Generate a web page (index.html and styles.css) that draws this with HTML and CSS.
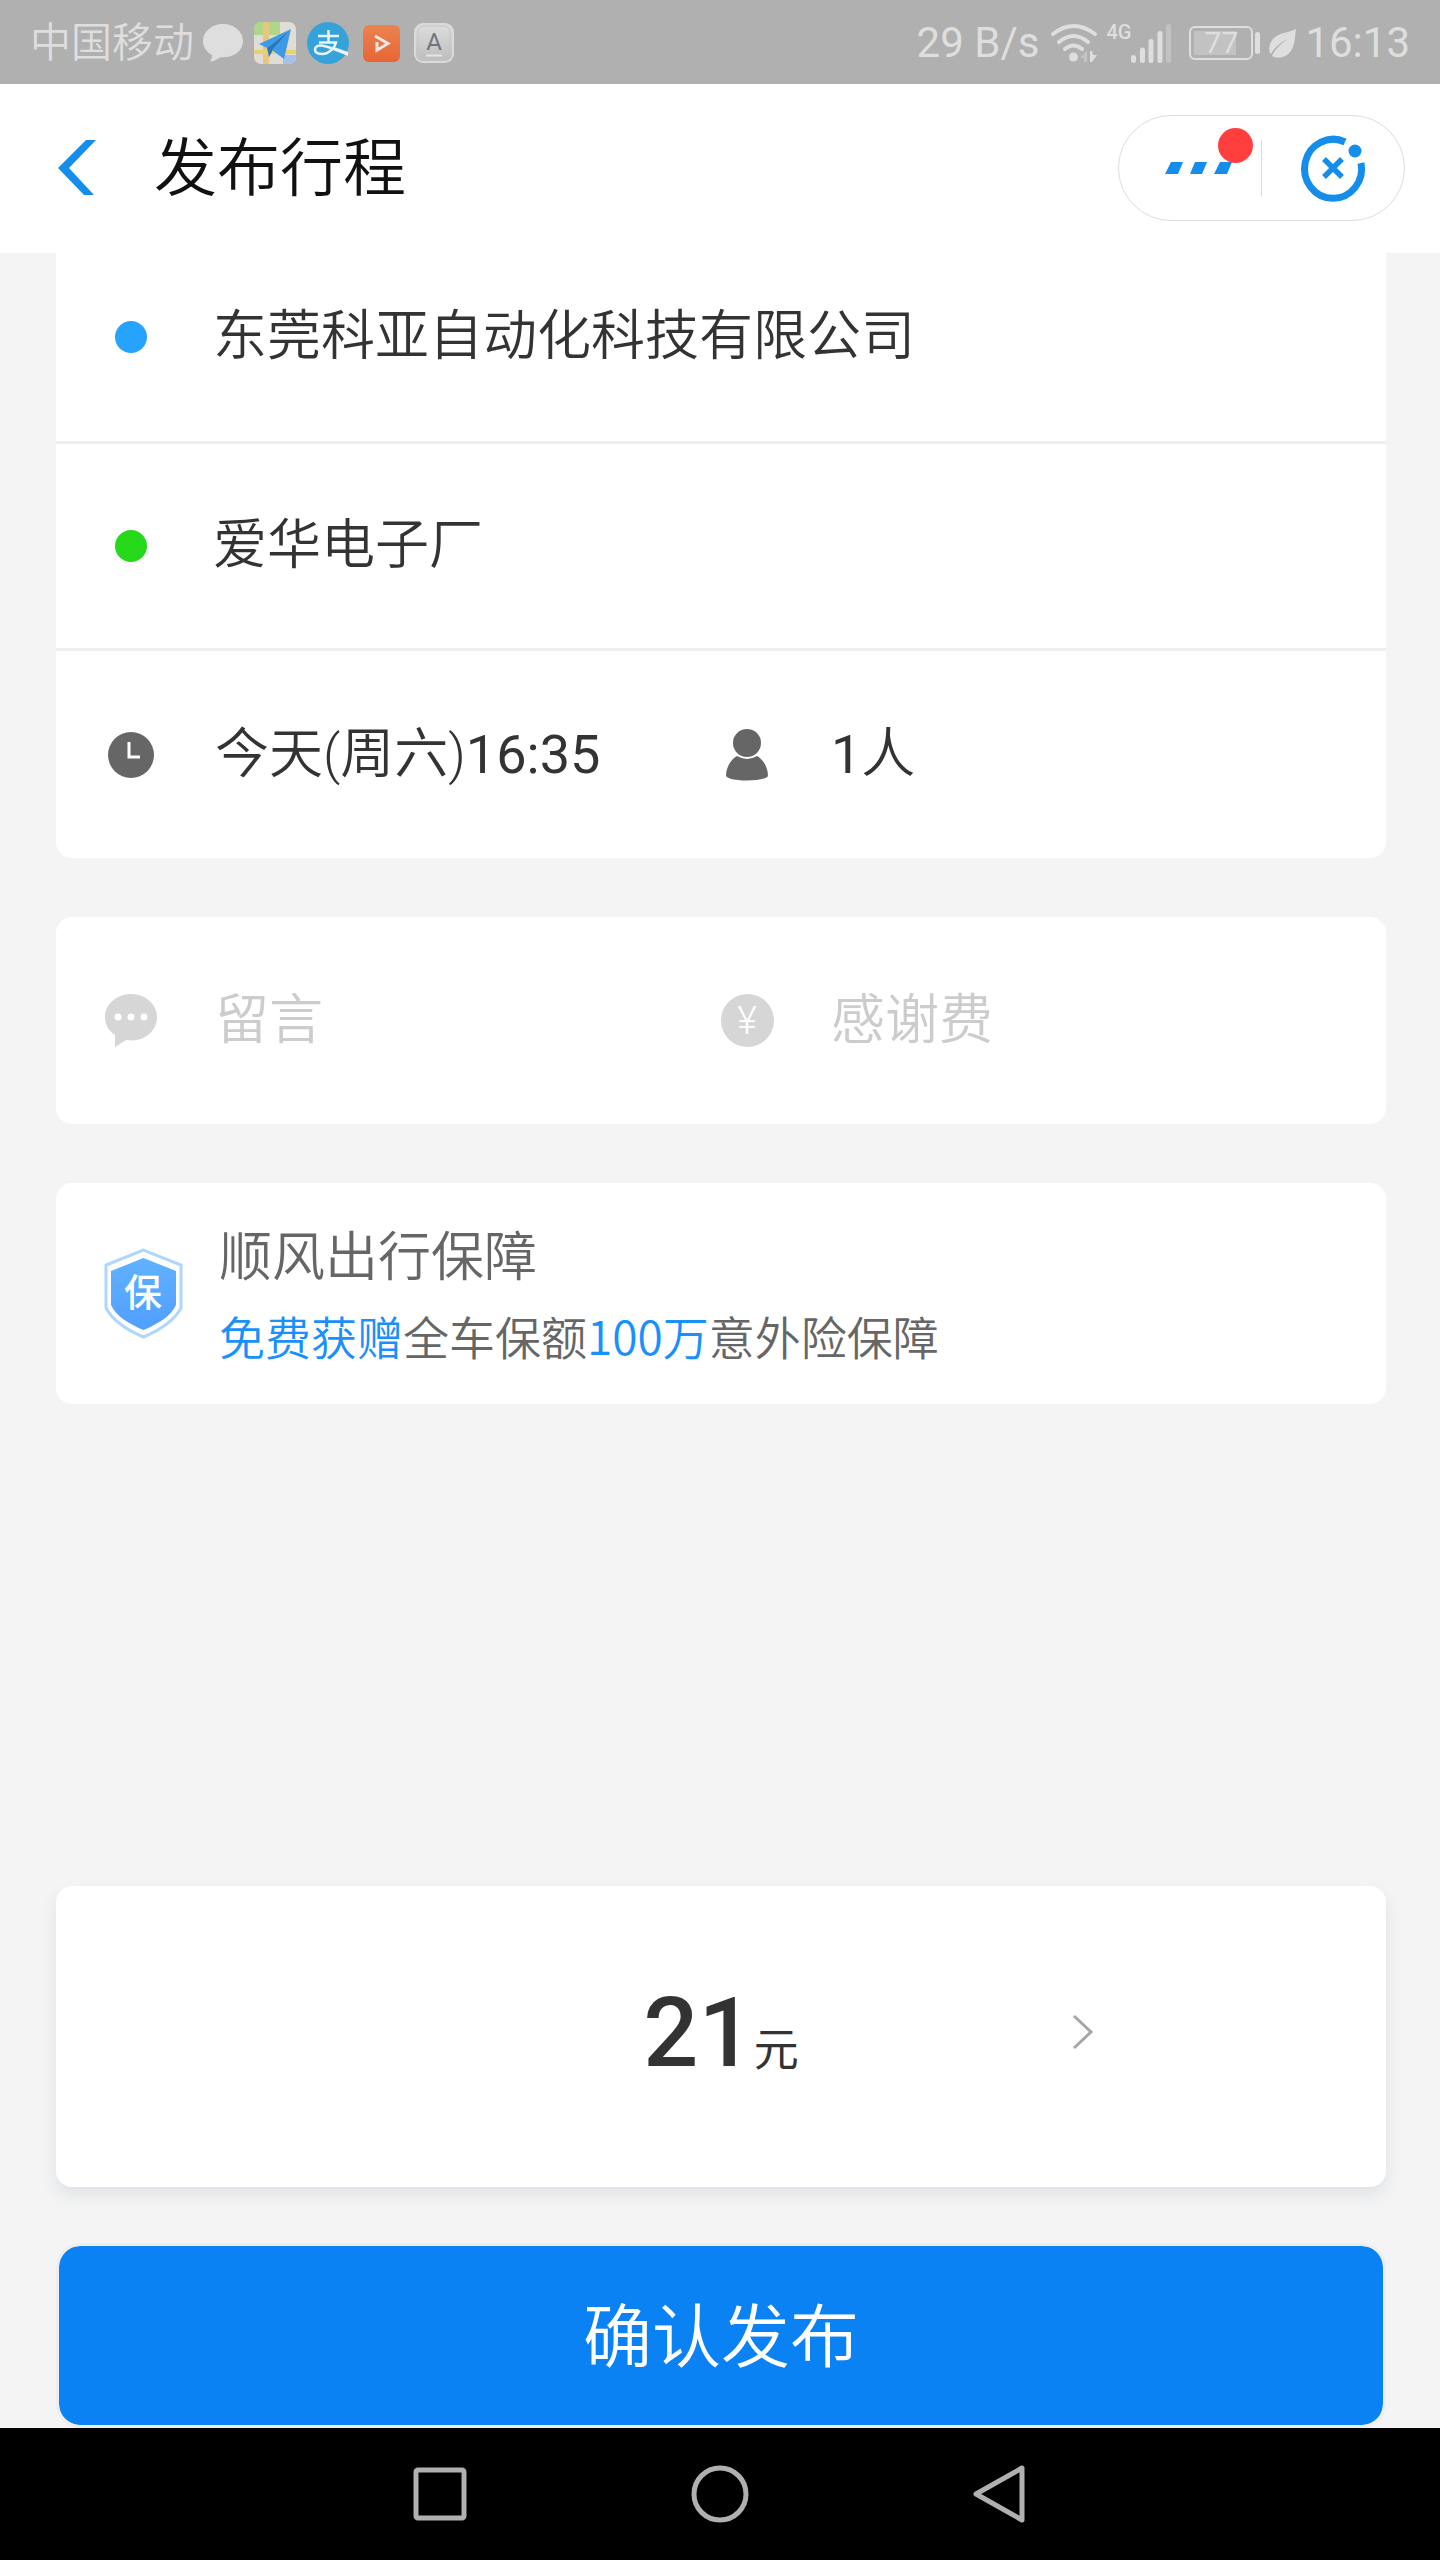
FILE: index.html
```html
<!DOCTYPE html>
<html lang="zh-CN">
<head>
<meta charset="utf-8">
<meta name="viewport" content="width=device-width, initial-scale=1">
<title>发布行程</title>
<link rel="stylesheet" href="styles.css">
</head>
<body>
<div class="status">
  <div class="status-left">
    <span class="carrier">中国移动</span>
    <svg width="40" height="38" viewBox="0 0 40 38"><path fill="#dedede" d="M20 0C9 0 0 7.500 0 17c0 6 3.500 11 9 14 0 2.500-.5 4-2 6.500 4.500-.5 8-2.500 10.500-4.300C30 34.500 40 27 40 17 40 7.500 31 0 20 0z"/></svg>
    <svg width="42" height="42" viewBox="0 0 42 42">
      <defs><clipPath id="map-clip"><rect width="42" height="42" rx="7"/></clipPath></defs>
      <g clip-path="url(#map-clip)">
        <rect width="42" height="42" fill="#dfddd5"/>
        <path fill="#afd78c" d="M0 0h26v13H0z"/>
        <path fill="#e8c67f" d="M9 0h6v42H9z"/>
        <path fill="#e8d26c" d="M0 28h42v4H0z"/>
        <path fill="#a8c0e8" d="M29 33h13v9H29z"/>
        <path fill="#3d9ce6" d="M37 7 5 22l8 4z"/>
        <path fill="#2878c0" d="M37 7 13 26l2 9 4-7z"/>
        <path fill="#3b9be8" d="M37 7 18 28l12 9z"/>
      </g>
    </svg>
    <svg width="42" height="42" viewBox="0 0 42 42">
      <circle cx="21" cy="21" r="21" fill="#35a3da"/>
      <g fill="none" stroke="#e9f3f8" stroke-width="2.500">
        <path d="M11 14h21M21.500 8v12M12 20.500h17c-1 5-7 11.500-13.500 11.500-5 0-7.500-2-7.500-4.500s2.500-4 5.500-4C20 23.500 30 29 41 32"/>
      </g>
      <path fill="#e9f3f8" d="m27 25 14 5v4l-16-7z"/>
    </svg>
    <svg class="gap-l" width="37" height="37" viewBox="0 0 37 37">
      <defs><linearGradient id="orange" x2="0" y2="1"><stop stop-color="#eb8450"/><stop offset="1" stop-color="#e76435"/></linearGradient></defs>
      <rect width="37" height="37" rx="6" fill="url(#orange)"/>
      <path fill="none" stroke="#f0e7e1" stroke-width="3" d="m12 11 13 7.500L14 25v-8"/>
    </svg>
    <svg class="gap-l" width="40" height="40" viewBox="0 0 40 40">
      <defs><linearGradient id="silver" x2="0" y2="1"><stop stop-color="#dedede"/><stop offset="1" stop-color="#bcbcbc"/></linearGradient></defs>
      <rect x="1" y="1" width="38" height="38" rx="8" fill="url(#silver)" stroke="#dadada" stroke-width="2"/>
      <rect x="4" y="3" width="32" height="34" rx="6" fill="none" stroke="#c4c4c4"/>
      <text class="key-letter" x="20" y="27" text-anchor="middle">A</text>
      <path stroke="#e5e5e5" stroke-width="2" d="M12 32.500h16"/>
    </svg>
  </div>
  <div class="status-right">
    <span>29 B/s</span>
    <svg class="wifi" width="46" height="39" viewBox="0 0 46 39">
      <g fill="none" stroke="#dedede" stroke-width="4" stroke-linecap="round"><path d="M2 10Q22.500-6 44 10M8 18q14.500-12 29 0M14 25q8.500-7 17 0"/></g>
      <circle cx="22.500" cy="33" r="4.500" fill="#dedede"/>
      <path fill="#c4c4c4" d="m29 34 7-7v11h-3v-4z"/><path fill="#dedede" d="M39 27h2l1 4h4l-5 7h-2z"/>
    </svg>
    <span class="net">4G</span>
    <svg width="40" height="39" viewBox="0 0 40 39"><g stroke="#dedede" stroke-width="5" stroke-linecap="round"><path d="M2.500 33.500v3M11.500 26v10.500M20 17.500v19M29 9.500v27"/><path stroke="#c2c2c2" d="M37.500 2.500v34"/></g></svg>
    <span class="battery"><span class="charge">77</span></span>
    <svg class="leaf" width="27" height="29" viewBox="0 0 27 29"><path fill="#dedede" d="M27 0C20 4 9 3 3 11c-3 5-4 11-1 14C6 18 11 14 18 10 12 15 6 20 3 27c5 3 14 2 19-5C26 16 26 7 27 0z"/></svg>
    <span>16:13</span>
  </div>
</div>

<header class="header">
  <button class="back" aria-label="返回"><svg width="38" height="55" viewBox="0 0 38 55"><path fill="#148eea" d="M38 0H28L0 28l26 27h10L11 28z"/></svg></button>
  <h1>发布行程</h1>
  <div class="capsule">
    <button class="more" aria-label="更多">
      <svg width="66" height="12" viewBox="0 0 66 12"><path fill="#148eea" d="M6 0h12l-5 12H0zM30 0h12l-5 12H25zM55 0h12l-5 12H49z"/></svg>
      <span class="badge"></span>
    </button>
    <button class="close" aria-label="关闭">
      <svg width="64" height="66" viewBox="0 0 64 66"><g fill="none" stroke="#148eea"><path stroke-width="7" d="M44 7A28.500 29.500 0 1 0 60 28"/><path stroke-width="5.500" d="m23 24 18 18m0-18L23 42"/></g><circle cx="54" cy="16" r="6.500" fill="#148eea"/></svg>
    </button>
  </div>
</header>

<main class="main">
  <section class="card trip">
    <button class="row origin"><span class="icon"><i class="dot start"></i></span><span>东莞科亚自动化科技有限公司</span></button>
    <button class="row"><span class="icon"><i class="dot end"></i></span><span>爱华电子厂</span></button>
    <div class="pair">
      <button class="cell">
        <span class="icon"><svg width="46" height="46" viewBox="0 0 46 46"><circle cx="23" cy="23" r="23" fill="#666"/><path fill="none" stroke="#fff" stroke-width="3" d="M21 10v15h11"/></svg></span>
        <span>今天(周六)<b>16:35</b></span>
      </button>
      <button class="cell">
        <span class="icon"><svg width="42" height="52" viewBox="0 0 42 52"><circle cx="21" cy="14" r="14" fill="#666"/><path fill="#666" d="M11 27q10 6 20 0c7 4 11 12 11 20-3 6-39 6-42 0 0-8 4-16 11-20z"/></svg></span>
        <span><b>1</b>人</span>
      </button>
    </div>
  </section>

  <section class="card pair extras">
    <button class="cell">
      <span class="icon"><svg width="52" height="53" viewBox="0 0 52 53"><path fill="#d6d6d6" d="M26 0C12 0 0 10 0 23c0 8 4 14 10 18v12l11-7c17 3 31-8 31-23C52 10 40 0 26 0z"/><g fill="#fff"><circle cx="13" cy="23" r="3.500"/><circle cx="26" cy="23" r="3.500"/><circle cx="39" cy="23" r="3.500"/></g></svg></span>
      <span>留言</span>
    </button>
    <button class="cell">
      <span class="icon"><svg width="53" height="53" viewBox="0 0 53 53"><circle cx="26.500" cy="26.500" r="26.500" fill="#d6d6d6"/><text class="yen" x="26" y="40" text-anchor="middle">¥</text></svg></span>
      <span>感谢费</span>
    </button>
  </section>

  <section class="card insurance">
    <svg width="79" height="91" viewBox="0 0 79 91">
      <defs><linearGradient id="shield" x2="0" y2="1"><stop stop-color="#60b2ff"/><stop offset="1" stop-color="#509fff"/></linearGradient></defs>
      <path fill="#fff" stroke="#b0d6fb" stroke-width="3" d="M39.500 2 2 17v43c7 13 21 22 37.500 29C56 82 70 73 77 60V17z"/>
      <path fill="url(#shield)" d="M39.500 10 7 23v34c5 11 18 19 32.500 25C54 76 67 68 72 57V23z"/>
      <text class="shield-text" x="39" y="58" text-anchor="middle">保</text>
    </svg>
    <div>
      <h2>顺风出行保障</h2>
      <p><em>免费获赠</em>全车保额<em>100万</em>意外险保障</p>
    </div>
  </section>

  <div class="bottom">
    <button class="card price">
      <span class="amount">21<small>元</small></span>
      <svg class="chevron" width="22" height="36" viewBox="0 0 22 36"><path fill="none" stroke="#a6a6a6" stroke-width="3" d="m2 2 17 16L2 34"/></svg>
    </button>
    <button class="submit">确认发布</button>
  </div>
</main>

<nav class="nav">
  <button aria-label="最近任务"><svg width="60" height="60" viewBox="0 0 60 60"><rect x="6" y="6" width="48" height="48" rx="2"/></svg></button>
  <button aria-label="主页"><svg width="60" height="60" viewBox="0 0 60 60"><circle cx="30" cy="30" r="26"/></svg></button>
  <button aria-label="返回上一级"><svg width="60" height="60" viewBox="0 0 60 60"><path stroke-linejoin="round" d="M52 4v52L6 30z"/></svg></button>
</nav>
</body>
</html>
```
FILE: styles.css
```css
* { box-sizing: border-box; }

body {
  margin: 0;
  min-height: 100vh;
  display: flex;
  flex-direction: column;
  background: #f4f4f4;
  color: #333;
  font-family: Roboto, "Noto Sans CJK SC", sans-serif;
  font-size: 54px;
  font-weight: 400;
  line-height: 64px;
}

button {
  margin: 0;
  padding: 0;
  border: 0;
  background: none;
  color: inherit;
  font: inherit;
  text-align: left;
  cursor: pointer;
}

svg { display: block; flex: none; overflow: visible; }
h1, h2, p { margin: 0; font-weight: 350; }
b { font-weight: 400; }

/* System status bar */
.status {
  height: 84px;
  padding: 2px 30px 0;
  display: flex;
  align-items: center;
  justify-content: space-between;
  background: #b0b0b0;
  color: #dedede;
  font-size: 42px;
  line-height: 82px;
  white-space: nowrap;
}
.status-left, .status-right { display: flex; align-items: center; }
.carrier { margin-right: 9px; font-size: 41px; font-weight: 350; }
.status-left svg + svg { margin-left: 11px; }
.status-left svg + .gap-l { margin-left: 14px; }
.key-letter { font-size: 24px; fill: #70747a; }
.wifi { margin-left: 12px; }
.net {
  align-self: flex-start;
  margin-left: 9px;
  padding-top: 20px;
  font-size: 20px;
  font-weight: 500;
  line-height: 20px;
}
.battery {
  position: relative;
  width: 64px;
  height: 34px;
  margin: 0 16px 0 18px;
  padding: 3px;
  border: 2px solid #dedede;
  border-radius: 6px;
}
.battery::after {
  content: "";
  position: absolute;
  right: -9px;
  top: 4px;
  width: 5px;
  height: 22px;
  border-radius: 3px;
  background: #dedede;
}
.charge {
  display: block;
  height: 100%;
  text-align: center;
  font-size: 30px;
  line-height: 24px;
  background: linear-gradient(90deg, #c2c2c2 77%, transparent 77%);
}
.leaf { margin-right: 9px; }

/* Title bar */
.header {
  position: sticky;
  top: 0;
  z-index: 1;
  height: 169px;
  padding: 0 35px 2px 58px;
  display: flex;
  align-items: center;
  background: #fff;
}
h1 {
  flex: 1;
  margin-left: 58px;
  padding-top: 2px;
  color: #111;
  font-size: 63px;
}
.capsule {
  width: 287px;
  height: 106px;
  display: grid;
  grid-template-columns: 1fr 1fr;
  border: 1px solid #ddd;
  border-radius: 53px;
}
.capsule button {
  display: flex;
  align-items: center;
  justify-content: center;
}
.capsule .more { position: relative; padding-left: 16px; }
.more::after {
  content: "";
  position: absolute;
  right: 0;
  top: 24px;
  bottom: 24px;
  width: 1px;
  background: #ddd;
}
.badge {
  position: absolute;
  right: 9px;
  top: 12px;
  width: 35px;
  height: 35px;
  border-radius: 50%;
  background: #ff3e3e;
}

/* Page content */
.main {
  flex: 1;
  padding: 0 54px 0 56px;
  display: flex;
  flex-direction: column;
  gap: 59px;
}
.card { border-radius: 16px; background: #fff; }
.trip { margin-top: -20px; }
.row, .cell { display: flex; align-items: center; font-weight: 350; }
.row {
  width: 100%;
  height: 207px;
  padding-left: 49px;
  gap: 56px;
  border-bottom: 3px solid #eee;
}
.origin { height: 211px; }
.cell { gap: 58px; }
.cell:first-child { padding-left: 49px; }
.icon { width: 52px; display: flex; justify-content: center; flex: none; }
.dot { width: 32px; height: 32px; border-radius: 50%; }
.start { background: #26a2ff; }
.end { background: #26d81a; }
.pair { display: grid; grid-template-columns: 1fr 1fr; height: 207px; }
.extras { color: #ccc; }
.yen { font-size: 38px; fill: #fff; }

.insurance {
  height: 221px;
  padding-left: 48px;
  display: flex;
  align-items: center;
  gap: 36px;
  color: #666;
  font-family: "Noto Sans CJK SC", sans-serif;
  line-height: 82px;
}
h2 { font-size: 53px; }
p { font-size: 46px; }
em { font-style: normal; color: #1a90fa; }
.shield-text { font-size: 38px; font-weight: 500; fill: #fff; }

.bottom { margin-top: auto; display: flex; flex-direction: column; gap: 56px; }
.price {
  position: relative;
  height: 301px;
  display: flex;
  align-items: center;
  justify-content: center;
  box-shadow: 0 8px 16px #dfe2e6;
}
.amount { padding-top: 10px; font-size: 97px; font-weight: 500; line-height: 112px; }
small { font-size: 45px; font-weight: 400; }
.chevron { position: absolute; left: 76%; margin: 0 0 10px 5px; }
.submit {
  height: 185px;
  padding-top: 6px;
  border: 3px solid #eee;
  border-radius: 24px;
  background: #0b82f4;
  background-clip: padding-box;
  color: #fff;
  font-size: 69px;
  font-weight: 350;
  text-align: center;
}

/* System navigation bar */
.nav {
  height: 132px;
  display: flex;
  align-items: center;
  justify-content: center;
  gap: 220px;
  background: #000;
}
.nav svg { fill: none; stroke: #b0b0b0; stroke-width: 5px; }
```
